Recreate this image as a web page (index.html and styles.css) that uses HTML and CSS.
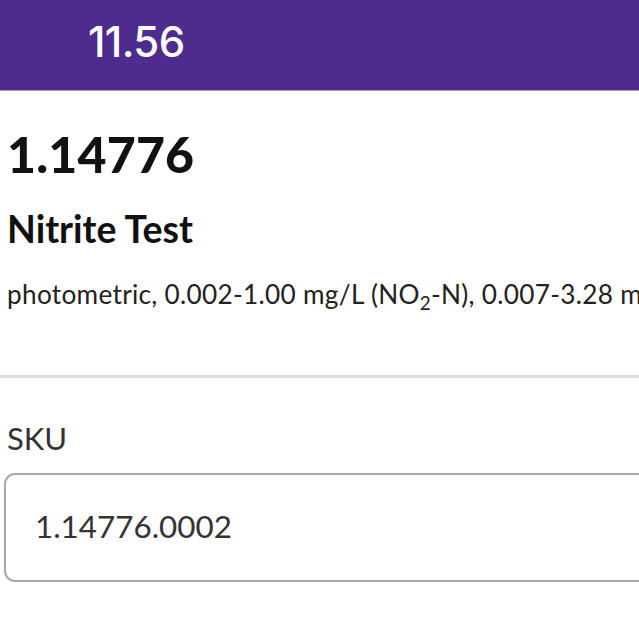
FILE: index.html
```html
<!DOCTYPE html>
<html>
<head>
<meta charset="utf-8">
<link rel="stylesheet" href="styles.css">
</head>
<body>
<header class="topbar"><span class="time">11.56</span></header>
<main class="content">
  <section class="product">
    <h1 class="code">1.14776</h1>
    <h2 class="name">Nitrite Test</h2>
    <p class="desc">photometric, 0.002-1.00 mg/L (NO<sub>2</sub>-N), 0.007-3.28 mg/L (NO<sub>2</sub><sup>-</sup>)</p>
  </section>
  <section class="field">
    <label class="label">SKU</label>
    <div class="input">1.14776.0002</div>
  </section>
</main>
</body>
</html>
```
FILE: styles.css
```css
html, body {
  margin: 0;
  padding: 0;
  background: #fff;
  overflow: hidden;
  width: 639px;
  height: 639px;
}
body {
  font-family: Lato, "Noto Sans", sans-serif;
}
.topbar {
  height: 91px;
  background: #4e2c8e;
  border-bottom: 1px solid #a99bcb;
  display: flex;
  align-items: flex-start;
  padding-left: 88px;
  box-sizing: border-box;
}
.time {
  font-family: Inter, "Liberation Sans", sans-serif;
  font-weight: 500;
  color: #fff;
  font-size: 42px;
  letter-spacing: -0.6px;
  line-height: 1;
  margin-top: 21px;
}
.content {
  width: 760px;
}
.product {
  padding: 33px 0 0 7px;
  border-bottom: 3px solid #dedede;
  padding-bottom: 65px;
}
.code {
  margin: 0;
  font-size: 50px;
  line-height: 1.2;
  font-weight: 900;
  color: #111;
  letter-spacing: 0.2px;
}
.name {
  margin: 22px 0 0;
  font-size: 37.5px;
  line-height: 1.2;
  font-weight: 700;
  color: #111;
}
.desc {
  margin: 28px 0 0;
  font-size: 26.2px;
  letter-spacing: 0.3px;
  line-height: 1.2;
  color: #222;
  white-space: nowrap;
}
.desc sub {
  font-size: 0.72em;
  line-height: 0;
  vertical-align: -0.3em;
}
.desc sup {
  font-size: 0.72em;
  line-height: 0;
}
.field {
  padding: 42px 0 0 4px;
}
.label {
  display: block;
  margin-left: 3px;
  font-size: 31px;
  line-height: 1.2;
  color: #333;
}
.input {
  margin-top: 15px;
  height: 109px;
  box-sizing: border-box;
  border: 2px solid #a8a8a8;
  border-radius: 11px;
  display: flex;
  align-items: center;
  padding-left: 29px;
  font-size: 31.4px;
  line-height: 1.2;
  color: #333;
}
```
